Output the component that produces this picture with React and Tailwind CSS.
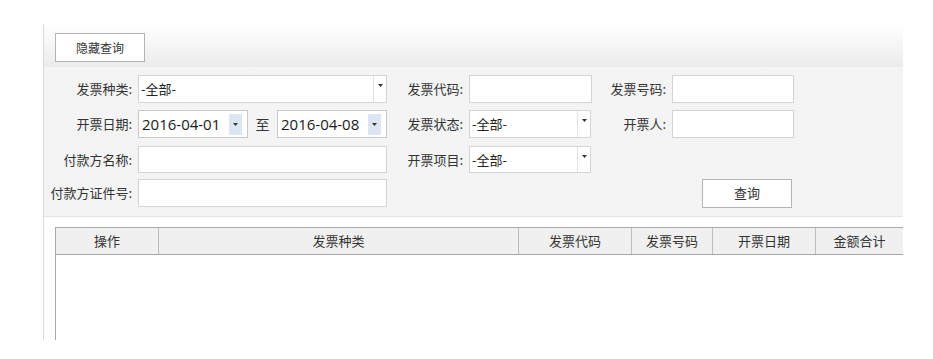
import React from 'react'

const cjk = "font-['Microsoft_YaHei','Noto_Sans_CJK_SC',sans-serif]"

function Arrow() {
  return (
    <svg width="5" height="3" viewBox="0 0 5 3" className="block">
      <path d="M0 0h5L2.5 3z" fill="#333" />
    </svg>
  )
}

function Label({ w, children }) {
  return (
    <div className={`${w} shrink-0 text-right text-[13px] text-[#333] pr-[6px] whitespace-nowrap`}>
      {children}
    </div>
  )
}

function TextBox({ w }) {
  return <div className={`${w} h-full bg-white border border-[#d4d4d4]`} />
}

function Select({ w, value }) {
  return (
    <div className={`${w} h-full bg-white border border-[#d4d4d4] flex`}>
      <div className="flex-1 flex items-center pl-[2px] text-[13px] text-[#222]">{value}</div>
      <div className="w-[13px] border-l border-[#e2e2e2] flex items-start justify-center pt-[8px]">
        <Arrow />
      </div>
    </div>
  )
}

function DateBox({ value }) {
  return (
    <div className="w-[110px] h-full bg-white border border-[#c9c9c9] flex items-center pl-[3px] pr-[5px]">
      <span className="flex-1 text-[15px] text-[#1a1a1a] font-['Open_Sans',sans-serif] leading-none">{value}</span>
      <div className="w-[13px] h-[21px] bg-[#dce6f3] flex items-center justify-center">
        <Arrow />
      </div>
    </div>
  )
}

const columns = [
  ['操作', 'w-[103px]'],
  ['发票种类', 'w-[360px]'],
  ['发票代码', 'w-[113px]'],
  ['发票号码', 'w-[81px]'],
  ['开票日期', 'w-[103px]'],
  ['金额合计', 'flex-1'],
]

export default function App() {
  return (
    <div className={`w-[933px] h-[359px] bg-white ${cjk} overflow-hidden`}>
      <div className="ml-[43px] mt-[24px] w-[860px] h-[316px] border-l border-[#dcdcdc] flex flex-col">
        {/* toolbar */}
        <div className="h-[43px] bg-linear-to-b from-white to-[#ebebeb] pl-[11px] pt-[9px]">
          <button className="w-[90px] h-[29px] bg-white border border-[#b4b4b4] text-[12px] text-[#333]">
            隐藏查询
          </button>
        </div>

        {/* query form */}
        <div className="h-[150px] bg-[#f4f4f4] border-b border-[#e3e3e3] pt-[8px]">
          <div className="flex items-center h-[28px]">
            <Label w="w-[94px]">发票种类:</Label>
            <Select w="w-[249px]" value="-全部-" />
            <Label w="w-[82px]">发票代码:</Label>
            <TextBox w="w-[123px]" />
            <Label w="w-[80px]">发票号码:</Label>
            <TextBox w="w-[122px]" />
          </div>
          <div className="flex items-center h-[28px] mt-[7px]">
            <Label w="w-[94px]">开票日期:</Label>
            <DateBox value="2016-04-01" />
            <div className="w-[29px] text-center text-[14px] text-[#333]">至</div>
            <DateBox value="2016-04-08" />
            <Label w="w-[82px]">发票状态:</Label>
            <Select w="w-[122px]" value="-全部-" />
            <Label w="w-[81px]">开票人:</Label>
            <TextBox w="w-[122px]" />
          </div>
          <div className="flex items-center h-[27px] mt-[8px]">
            <Label w="w-[94px]">付款方名称:</Label>
            <TextBox w="w-[249px]" />
            <Label w="w-[82px]">开票项目:</Label>
            <Select w="w-[122px]" value="-全部-" />
          </div>
          <div className="flex items-center h-[28px] mt-[6px]">
            <Label w="w-[94px]">付款方证件号:</Label>
            <TextBox w="w-[249px]" />
            <div className="w-[315px]" />
            <button className="w-[90px] h-[29px] bg-white border border-[#b4b4b4] text-[13px] text-[#333]">
              查询
            </button>
          </div>
        </div>

        {/* result table */}
        <div className="flex-1 pt-[10px] pl-[11px] flex flex-col">
          <div className="flex h-[28px] bg-[#f0f0f0] border-t border-b border-l border-[#a9a9a9]">
            {columns.map(([name, w], i) => (
              <div
                key={name}
                className={`${w} flex items-center justify-center text-[13px] text-[#333] ${i < columns.length - 1 ? 'border-r border-[#bdbdbd]' : ''}`}
              >
                {name}
              </div>
            ))}
          </div>
          <div className="flex-1 border-l border-[#a9a9a9] bg-white" />
        </div>
      </div>
    </div>
  )
}
